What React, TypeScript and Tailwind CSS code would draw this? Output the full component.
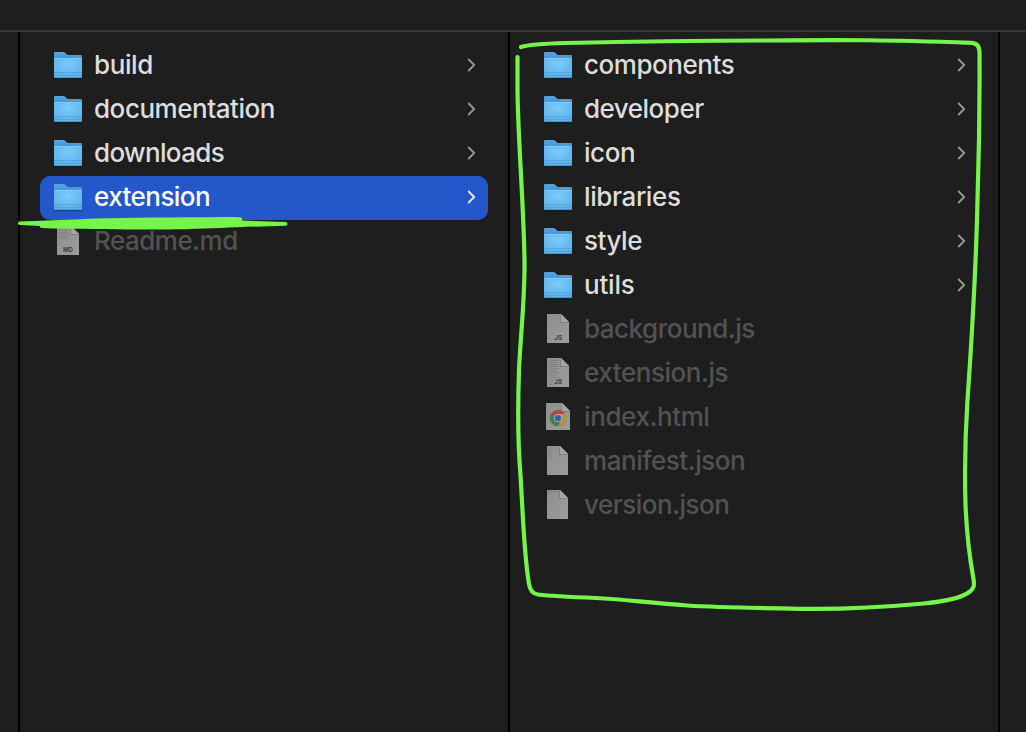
import React from "react";

type Kind = "folder" | "md" | "js" | "jsText" | "html" | "json" | "jsonEmpty";
type Entry = { name: string; kind: Kind; tracking: string; selected?: boolean };

const LEFT: Entry[] = [
  { name: "build", kind: "folder", tracking: "tracking-[-0.4px]" },
  { name: "documentation", kind: "folder", tracking: "tracking-[-0.45px]" },
  { name: "downloads", kind: "folder", tracking: "tracking-[-0.65px]" },
  { name: "extension", kind: "folder", tracking: "tracking-[-0.55px]", selected: true },
  { name: "Readme.md", kind: "md", tracking: "tracking-[-0.5px]" },
];

const RIGHT: Entry[] = [
  { name: "components", kind: "folder", tracking: "tracking-[-0.45px]" },
  { name: "developer", kind: "folder", tracking: "tracking-[-0.5px]" },
  { name: "icon", kind: "folder", tracking: "tracking-[-0.45px]" },
  { name: "libraries", kind: "folder", tracking: "tracking-[-0.4px]" },
  { name: "style", kind: "folder", tracking: "tracking-[-0.45px]" },
  { name: "utils", kind: "folder", tracking: "tracking-[-0.2px]" },
  { name: "background.js", kind: "js", tracking: "tracking-[-0.5px]" },
  { name: "extension.js", kind: "jsText", tracking: "tracking-[-0.45px]" },
  { name: "index.html", kind: "html", tracking: "tracking-[-0.4px]" },
  { name: "manifest.json", kind: "json", tracking: "tracking-[-0.45px]" },
  { name: "version.json", kind: "jsonEmpty", tracking: "tracking-[-0.5px]" },
];

function FolderIcon() {
  return (
    <svg viewBox="0 0 32 32" className="size-8 shrink-0">
      <path d="M2 27.5h28v1a1 1 0 0 1-1 1H3a1 1 0 0 1-1-1z" fill="#000" opacity=".22" />
      <path d="M2 3.2Q2 2 3.2 2h7.6c1.2 0 1.8.3 2.6 1l1.3 1.2c.5.5 1 .7 1.8.7h12.3Q30 4.9 30 6.1V12H2z" fill="url(#folderBack)" />
      <path d="M2 9Q2 8 3 8h26q1 0 1 1v17.8Q30 28 28.8 28H3.2Q2 28 2 26.8z" fill="url(#folderFront)" />
      <path d="M2.5 8.4h27" stroke="#86d0fa" strokeWidth=".8" />
      <path d="M2 22.5h28M2 25.4h28" stroke="#4a9cd2" strokeWidth=".8" opacity=".7" />
      <path d="M2.3 27.6h27.4" stroke="#3f8fc6" strokeWidth=".8" />
    </svg>
  );
}

function Sheet({ right = 27, top = 0, bottom = 29 }: { right?: number; top?: number; bottom?: number }) {
  const left = right === 28 ? 4 : 5;
  const fold = right - 8;
  return (
    <>
      <path d={`M${left} ${top}H${fold}L${right} ${top + 8}V${bottom}H${left}z`} fill="url(#sheet)" />
      <path d={`M${fold - 1} ${top + 1}V${top + 9}H${right}V${top + 8}z`} fill="#6d6d6d" opacity=".55" />
      <path d={`M${fold} ${top}V${top + 8}H${right}z`} fill="#a4a4a4" />
    </>
  );
}

function FileIcon({ kind }: { kind: Kind }) {
  const textLines = "M6.5 2.500h11M6.5 4.500h9M6.5 6.500h10.5M6.5 8.500h10M6.5 10.500h12M6.5 12.500h8";
  return (
    <svg viewBox="0 0 32 32" className="size-8 shrink-0">
      {kind === "html" ? (
        <>
          <Sheet right={28} top={1} bottom={28} />
          <circle cx="16" cy="16" r="8.2" fill="#b04a3e" />
          <path d="M16 16L8.9 11.9A8.2 8.2 0 0 0 16 24.2l3.6-6.2z" fill="#3f8350" />
          <path d="M16 12.1h7.2A8.2 8.2 0 0 1 16 24.2l3.5-6.1z" fill="#b5953e" />
          <circle cx="16" cy="16" r="4" fill="#adb0b4" />
          <circle cx="16" cy="16" r="3.1" fill="#3362b0" />
        </>
      ) : (
        <Sheet right={kind === "json" || kind === "jsonEmpty" ? 26 : 27} />
      )}
      {kind === "md" && <path d={textLines} stroke="#7c7c7c" strokeWidth=".7" />}
      {kind === "jsText" && (
        <path
          d={textLines + "M6.5 14.5h11M6.5 17h9M6.5 19.5h11M6.5 22h8M6.5 24.5h5M6.5 26.5h5"}
          stroke="#7a7a7a"
          strokeWidth=".7"
        />
      )}
      {kind === "js" && <path d="M7 2.5h9" stroke="#858585" strokeWidth=".7" />}
      {kind === "json" && <path d="M6 2h4M6.5 4.5h2.5M6.5 7h3M6.5 9h2M6 11.5h4.5" stroke="#7d7d7d" strokeWidth=".8" />}
      {kind === "jsonEmpty" && <path d="M6 1.500h11" stroke="#7d7d7d" strokeWidth=".8" />}
      {(kind === "js" || kind === "jsText") && (
        <text x="16.3" y="26" textAnchor="middle" className="fill-[#333] font-['Inter'] text-[6.5px] font-semibold">JS</text>
      )}
      {kind === "md" && (
        <text x="16" y="26" textAnchor="middle" className="fill-[#333] font-['Inter'] text-[6px] font-semibold">MD</text>
      )}
    </svg>
  );
}

function Row({ entry }: { entry: Entry }) {
  const folder = entry.kind === "folder";
  const color = entry.selected ? "text-white" : folder ? "text-[#dddddd]" : "text-[#525252]";
  return (
    <li className={`flex h-11 items-center gap-2.5 rounded-[10px] pr-[11px] pl-3 ${entry.selected ? "bg-[#2457c9]" : ""}`}>
      {folder ? <FolderIcon /> : <FileIcon kind={entry.kind} />}
      <span className={`flex-1 pb-0.5 text-[26px] leading-8 font-medium whitespace-nowrap ${color} ${entry.tracking}`}>{entry.name}</span>
      {folder && (
        <svg viewBox="0 0 10 16" className="mb-0.5 h-4 w-2.5 shrink-0" fill="none">
          <path
            d="M1.7 2.5L7.2 8L1.7 13.5"
            stroke={entry.selected ? "#e6edfb" : "#969696"}
            strokeWidth="1.8"
            strokeLinecap="round"
            strokeLinejoin="round"
          />
        </svg>
      )}
    </li>
  );
}

function Column({ entries }: { entries: Entry[] }) {
  return (
    <ul className="w-[490px] shrink-0 border-r-2 border-black px-5 pt-3">
      {entries.map((entry) => (
        <Row key={entry.name} entry={entry} />
      ))}
    </ul>
  );
}

export default function App() {
  return (
    <main className="relative flex h-[732px] w-[1026px] flex-col overflow-hidden bg-[#1e1e1e] font-['Inter',sans-serif]">
      <svg className="absolute size-0" aria-hidden="true">
        <defs>
          <linearGradient id="folderBack" x1="0" y1="0" x2="0" y2="1">
            <stop offset="0" stopColor="#55a7e2" />
            <stop offset="1" stopColor="#3b87cc" />
          </linearGradient>
          <radialGradient id="folderFront" cx=".5" cy=".3" r=".75">
            <stop offset="0" stopColor="#7accfa" />
            <stop offset="1" stopColor="#5aafe6" />
          </radialGradient>
          <linearGradient id="sheet" x1="0" y1="0" x2="1" y2="1">
            <stop offset="0" stopColor="#8f8f8f" />
            <stop offset="1" stopColor="#9c9c9c" />
          </linearGradient>
        </defs>
      </svg>
      <header className="h-8 shrink-0 border-b-2 border-[#373737]" />
      <div className="flex min-h-0 flex-1">
        <div className="w-5 shrink-0 border-r-2 border-black" />
        <Column entries={LEFT} />
        <Column entries={RIGHT} />
      </div>
      <svg viewBox="0 0 1026 732" className="pointer-events-none absolute inset-0 h-full w-full" fill="none">
        <path
          d="M521 47C530 44 548 43.5 566 43C650 41 700 40.5 770 40.5C850 39.5 885 40 972 42.8Q979.5 43.5 979.5 52C980 120 979 155 977.5 200C976 270 971 350 967.5 400C964.5 445 964.5 470 965.5 505C967 540 970 560 973.5 579C974.5 586 974 588 970 591.5C962 598 944 601.5 924 603.5C880 607.5 835 609.5 800 608.8C750 608 720 607.5 687 605.5C650 603 620 599 596 598C570 597 550 596 538 594.500Q530.500 593.500 529 584C524 555 523 515 520.5 475C517 435 518 400 519 370C520.5 335 525 300 524.5 260C523.5 200 518 140 517.5 90V57"
          stroke="#75f54a"
          strokeWidth="4.2"
          strokeLinecap="round"
          strokeLinejoin="round"
        />
        <path
          d="M19 221.5C17 223 18 225 20 225L40 226V227.500Q43 228.5 60 228.6C110 229.5 160 230 190 229C215 228.5 250 226.5 286 225.7Q289 224 286 222L242 220.5V218Q240 216.8 235 217C160 217.5 110 217.5 75 219.5C55 220.5 40 220.5 19 221.5Z"
          fill="#75f54a"
        />
      </svg>
    </main>
  );
}
